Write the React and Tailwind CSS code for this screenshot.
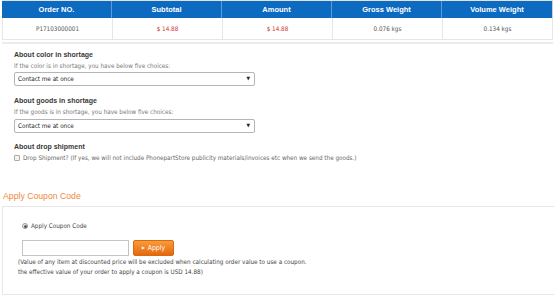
import React from "react";

const R = { fontFamily: '"DejaVu Sans Condensed", "DejaVu Sans", sans-serif' };
const B = { fontFamily: '"Liberation Sans", Arial, sans-serif' };

function Select() {
  return (
    <div className="w-[241px] h-[14px] border border-[#b5b5b5] rounded-[2px] bg-white flex items-center justify-between pl-[3px] pr-[4px] text-[6.3px] text-[#222]">
      <span>Contact me at once</span>
      <span className="text-[5px] text-[#222]">▼</span>
    </div>
  );
}

function Heading({ children, className = "" }) {
  return (
    <div style={B} className={`h-[10px] flex items-center text-[7px] font-bold text-[#3a3a3a] ${className}`}>
      {children}
    </div>
  );
}

export default function App() {
  const heads = ["Order NO.", "Subtotal", "Amount", "Gross Weight", "Volume Weight"];
  const vals = [
    { t: "P17103000001", c: "text-[#555]" },
    { t: "$ 14.88", c: "text-[#d0312d]" },
    { t: "$ 14.88", c: "text-[#d0312d]" },
    { t: "0.076 kgs", c: "text-[#555]" },
    { t: "0.134 kgs", c: "text-[#555]" },
  ];
  return (
    <div style={R} className="w-[554px] h-[297px] bg-white overflow-hidden">
      <div className="ml-[2px] w-[551px] border-t border-[#e2e2e2]">
        <div className="grid grid-cols-5 h-[17px] bg-[#0c6bc0] border-r border-[#cfcfcf]">
          {heads.map((h, i) => (
            <div
              key={h}
              style={B}
              className={`flex items-center justify-center text-white font-bold text-[7.5px] ${i < 4 ? "border-r border-[#5e9ad6]" : ""}`}
            >
              {h}
            </div>
          ))}
        </div>
        <div className="grid grid-cols-5 h-[22px] border-b border-l border-[#e6e6e6]">
          {vals.map((v, i) => (
            <div
              key={i}
              className={`flex items-center justify-center text-[6.3px] ${v.c} border-r border-[#e6e6e6]`}
            >
              {v.t}
            </div>
          ))}
        </div>
      </div>
      <div className="ml-[2px] w-[551px] h-[2px] mt-[2px] bg-[#ececec]" />

      <div className="pl-[14px] pt-[6px]">
        <Heading>About color in shortage</Heading>
        <div className="h-[12px] flex items-center text-[6.3px] text-[#777]">If the color is in shortage, you have below five choices:</div>
        <div className="mt-[0px]"><Select /></div>

        <Heading className="mt-[10px]">About goods in shortage</Heading>
        <div className="h-[12px] flex items-center text-[6.3px] text-[#777]">If the goods is in shortage, you have below five choices:</div>
        <div className="mt-[1px]"><Select /></div>

        <Heading className="mt-[9px]">About drop shipment</Heading>
        <div className="h-[12px] flex items-center gap-[3px] text-[6.3px] text-[#666]">
          <span className="w-[6px] h-[6px] border border-[#a9a9a9] rounded-[1px] bg-[#f4f4f4]" />
          <span>Drop Shipment? (If yes, we will not include PhonepartStore publicity materials/invoices etc when we send the goods.)</span>
        </div>
      </div>

      <div style={B} className="pl-[3px] mt-[26px] h-[14px] flex items-center text-[8.7px] text-[#f08a3c]">Apply Coupon Code</div>
      <div className="ml-[2px] mt-[2px] h-[89px] border border-r-0 border-[#e6e6e6] pl-[19px] pt-[14px]">
        <div className="h-[10px] flex items-center gap-[3px] text-[6.3px] text-[#444]">
          <span className="w-[6px] h-[6px] rounded-full border border-[#9a9a9a] bg-[#eee] flex items-center justify-center">
            <span className="w-[3px] h-[3px] rounded-full bg-[#555]" />
          </span>
          <span>Apply Coupon Code</span>
        </div>
        <div className="mt-[9px] flex items-center gap-[4px]">
          <div className="w-[107px] h-[16px] border border-[#c4c4c4] bg-white" />
          <div className="w-[41px] h-[16px] rounded-[2px] bg-gradient-to-b from-[#f99b3a] to-[#e4680a] border border-[#d96a10] flex items-center justify-center gap-[3px] text-white text-[6.8px]">
            <span className="text-[4px]">▶</span>
            <span>Apply</span>
          </div>
        </div>
        <div className="-ml-[4px] mt-[1px] text-[6.3px] leading-[10px] text-[#444]">
          <div>(Value of any item at discounted price will be excluded when calculating order value to use a coupon.</div>
          <div>the effective value of your order to apply a coupon is USD 14.88)</div>
        </div>
      </div>
    </div>
  );
}
